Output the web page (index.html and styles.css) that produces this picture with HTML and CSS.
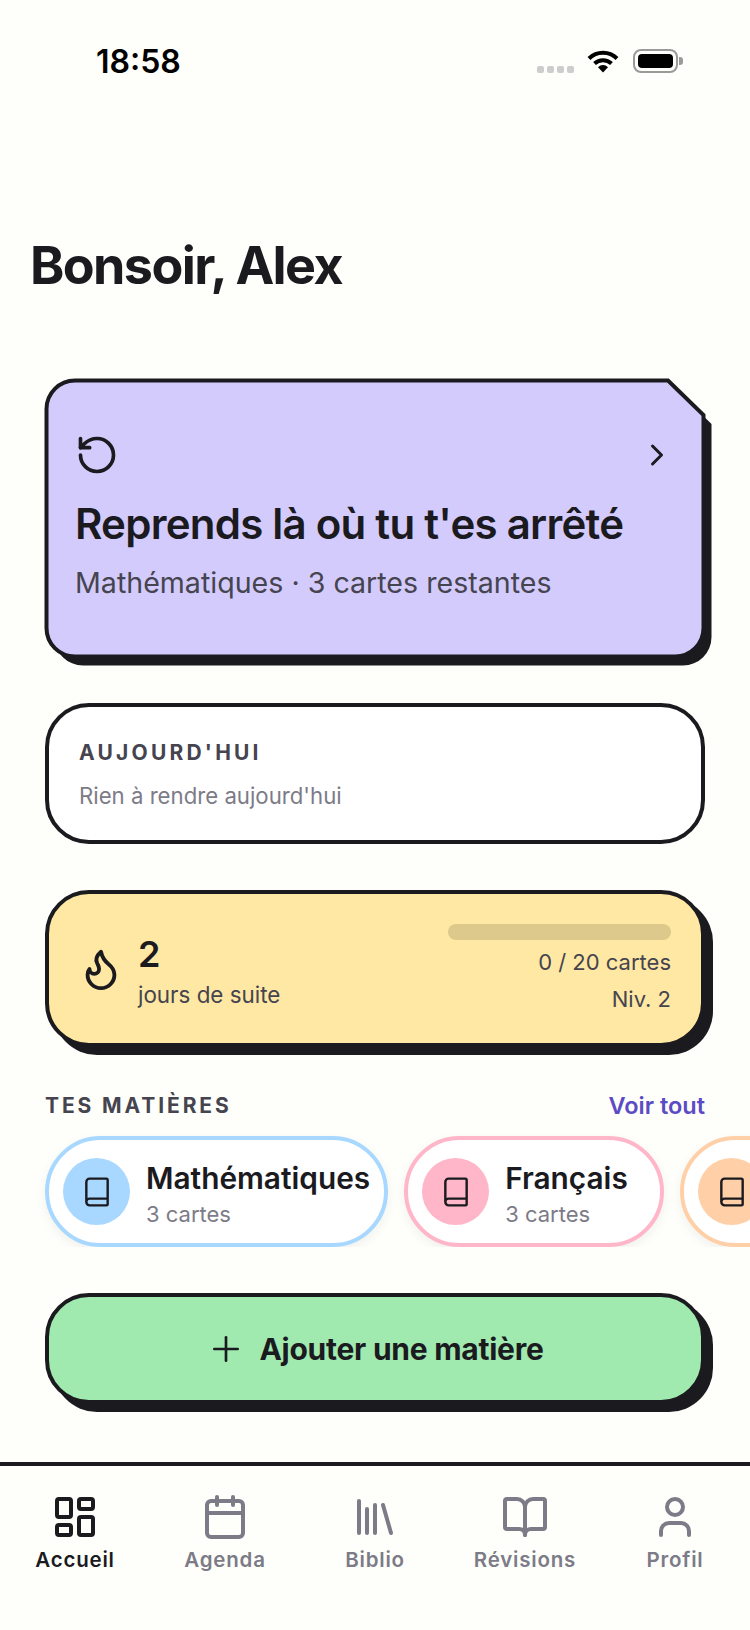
FILE: index.html
```html
<!DOCTYPE html>
<html lang="fr">
<head>
<meta charset="UTF-8">
<title>Accueil</title>
<link rel="stylesheet" href="styles.css">
</head>
<body>

<div class="status-bar">
	<span class="status-time">18:58</span>
	<div class="status-icons">
		<div class="signal-dots"><i></i><i></i><i></i><i></i></div>
		<svg class="wifi" width="32" height="24" viewBox="0 0 32 24">
			<path d="M2 9.5a20 20 0 0 1 28 0" fill="none" stroke="#000" stroke-width="4"/>
			<path d="M7.5 14.5a12.4 12.4 0 0 1 17 0" fill="none" stroke="#000" stroke-width="4"/>
			<path d="M11 18.2a7 7 0 0 1 10 0L16 23.5z" fill="#000"/>
		</svg>
		<div class="battery"><div class="battery-fill"></div></div>
		<div class="battery-nub"></div>
	</div>
</div>

<h1 class="greeting">Bonsoir, Alex</h1>

<div class="content">
	<!-- carte reprendre, coin coupe dessine en svg -->
	<div class="card-resume">
		<svg class="card-resume-bg" width="660" height="279" viewBox="0 0 660 279">
			<path transform="translate(8 9)" d="M30 1.5H623L658.5 36V249a28.5 28.5 0 0 1-28.5 28.5H30A28.5 28.5 0 0 1 1.5 249V30A28.5 28.5 0 0 1 30 1.5z" fill="#1a1a1f"/>
			<path d="M30 1.5H623L658.5 36V249a28.5 28.5 0 0 1-28.5 28.5H30A28.5 28.5 0 0 1 1.5 249V30A28.5 28.5 0 0 1 30 1.5z" fill="#d4cbfd" stroke="#1a1a1f" stroke-width="4"/>
		</svg>
		<div class="card-resume-top">
			<svg class="ico" width="44" height="44" viewBox="0 0 24 24"><path d="M3 12a9 9 0 1 0 9-9 9.75 9.75 0 0 0-6.74 2.74L3 8"/><path d="M3 3v5h5"/></svg>
			<svg class="ico" width="36" height="36" viewBox="0 0 24 24"><path d="m9 18 6-6-6-6"/></svg>
		</div>
		<div class="card-resume-title">Reprends là où tu t'es arrêté</div>
		<div class="card-resume-sub">Mathématiques · 3 cartes restantes</div>
	</div>

	<div class="card-today">
		<div class="label">AUJOURD'HUI</div>
		<div class="card-today-text">Rien à rendre aujourd'hui</div>
	</div>

	<div class="card-streak">
		<svg class="ico" width="46" height="46" viewBox="0 0 24 24"><path d="M8.5 14.5A2.5 2.5 0 0 0 11 12c0-1.38-.5-2-1-3-1.072-2.143-.224-4.054 2-6 .5 2.5 2 4.9 4 6.5 2 1.6 3 3.5 3 5.5a7 7 0 1 1-14 0c0-1.153.433-2.294 1-3a2.5 2.5 0 0 0 2.5 2.5z"/></svg>
		<div class="streak-left">
			<div class="streak-num">2</div>
			<div class="streak-text">jours de suite</div>
		</div>
		<div class="streak-right">
			<div class="progress"></div>
			<div class="streak-count">0 / 20 cartes</div>
			<div class="streak-level">Niv. 2</div>
		</div>
	</div>

	<div class="section-head">
		<span class="label">TES MATIÈRES</span>
		<span class="see-all">Voir tout</span>
	</div>
</div>

<div class="chips">
	<div class="chip chip-blue">
		<div class="chip-circle"><svg class="ico ico-thin" width="32" height="32" viewBox="0 0 24 24"><path d="M4 19.5v-15A2.5 2.5 0 0 1 6.5 2H19a1 1 0 0 1 1 1v18a1 1 0 0 1-1 1H6.5a1 1 0 0 1 0-5H20"/></svg></div>
		<div class="chip-body">
			<div class="chip-name">Mathématiques</div>
			<div class="chip-sub">3 cartes</div>
		</div>
	</div>
	<div class="chip chip-pink">
		<div class="chip-circle"><svg class="ico ico-thin" width="32" height="32" viewBox="0 0 24 24"><path d="M4 19.5v-15A2.5 2.5 0 0 1 6.5 2H19a1 1 0 0 1 1 1v18a1 1 0 0 1-1 1H6.5a1 1 0 0 1 0-5H20"/></svg></div>
		<div class="chip-body">
			<div class="chip-name">Français</div>
			<div class="chip-sub">3 cartes</div>
		</div>
	</div>
	<div class="chip chip-orange">
		<div class="chip-circle"><svg class="ico ico-thin" width="32" height="32" viewBox="0 0 24 24"><path d="M4 19.5v-15A2.5 2.5 0 0 1 6.5 2H19a1 1 0 0 1 1 1v18a1 1 0 0 1-1 1H6.5a1 1 0 0 1 0-5H20"/></svg></div>
	</div>
</div>

<div class="content">
	<div class="btn-add">
		<svg class="ico ico-plus" width="40" height="40" viewBox="0 0 24 24"><path d="M5 12h14"/><path d="M12 5v14"/></svg>
		<span>Ajouter une matière</span>
	</div>
</div>

<div class="tabbar">
	<div class="tab tab-active">
		<svg class="ico" width="48" height="48" viewBox="0 0 24 24"><rect x="3" y="3" width="7" height="9" rx="1"/><rect x="14" y="3" width="7" height="5" rx="1"/><rect x="14" y="12" width="7" height="9" rx="1"/><rect x="3" y="16" width="7" height="5" rx="1"/></svg>
		<span>Accueil</span>
	</div>
	<div class="tab">
		<svg class="ico" width="48" height="48" viewBox="0 0 24 24"><path d="M8 2v4"/><path d="M16 2v4"/><rect x="3" y="4" width="18" height="18" rx="2"/><path d="M3 10h18"/></svg>
		<span>Agenda</span>
	</div>
	<div class="tab">
		<svg class="ico" width="48" height="48" viewBox="0 0 24 24"><path d="m16 6 4 14"/><path d="M12 6v14"/><path d="M8 8v12"/><path d="M4 4v16"/></svg>
		<span>Biblio</span>
	</div>
	<div class="tab">
		<svg class="ico" width="48" height="48" viewBox="0 0 24 24"><path d="M12 7v14"/><path d="M3 18a1 1 0 0 1-1-1V4a1 1 0 0 1 1-1h5a4 4 0 0 1 4 4 4 4 0 0 1 4-4h5a1 1 0 0 1 1 1v13a1 1 0 0 1-1 1h-6a3 3 0 0 0-3 3 3 3 0 0 0-3-3z"/></svg>
		<span>Révisions</span>
	</div>
	<div class="tab">
		<svg class="ico" width="48" height="48" viewBox="0 0 24 24"><path d="M19 21v-2a4 4 0 0 0-4-4H9a4 4 0 0 0-4 4v2"/><circle cx="12" cy="7" r="4"/></svg>
		<span>Profil</span>
	</div>
</div>

</body>
</html>
```

FILE: styles.css
```css
/* base */
body {
	margin: 0;
	width: 750px;
	height: 1630px;
	overflow: hidden;
	background-color: #fefffa;
	color: #1a1a1f;
	font-family: "Inter", "Liberation Sans", sans-serif;
}

.ico {
	display: block;
	flex: none;
	fill: none;
	stroke: currentColor;
	stroke-width: 2;
	stroke-linecap: round;
	stroke-linejoin: round;
}

.label {
	font-size: 21px;
	font-weight: 700;
	letter-spacing: 3.2px;
	color: #45444f;
}

.content {
	padding: 0 45px;
}

/* status bar */
.status-bar {
	height: 122px;
	display: flex;
	justify-content: space-between;
	align-items: center;
	padding-left: 96px;
	padding-right: 67px;
	box-sizing: border-box;
}

.status-time {
	font-size: 32px;
	font-weight: 600;
	color: #000;
}

.status-icons {
	display: flex;
	align-items: center;
}

.signal-dots {
	display: flex;
	gap: 3px;
	margin-top: 17px;
	margin-right: 13px;
}

.signal-dots i {
	width: 7px;
	height: 7px;
	border-radius: 2px;
	background-color: #cdcdcd;
}

.wifi {
	margin-right: 14px;
}

.battery {
	width: 45px;
	height: 24px;
	padding: 3px;
	box-sizing: border-box;
	border: 2px solid #9a9a9a;
	border-radius: 8px;
}

.battery-fill {
	height: 100%;
	background-color: #000;
	border-radius: 4px;
}

.battery-nub {
	width: 4px;
	height: 8px;
	margin-left: 1px;
	background-color: #9a9a9a;
	border-radius: 0 3px 3px 0;
}

/* titre */
.greeting {
	margin: 114px 0 83px 30px;
	font-size: 52px;
	line-height: 60px;
	font-weight: 700;
	letter-spacing: -1.6px;
}

/* carte reprendre */
.card-resume {
	position: relative;
	height: 279px;
	padding: 54px 30px 0;
	box-sizing: border-box;
}

.card-resume-bg {
	position: absolute;
	top: 0;
	left: 0;
	overflow: visible;
}

.card-resume-top {
	position: relative;
	display: flex;
	justify-content: space-between;
	align-items: center;
}

.card-resume-title {
	position: relative;
	margin-top: 23px;
	font-size: 42px;
	line-height: 48px;
	font-weight: 600;
	letter-spacing: -0.75px;
}

.card-resume-sub {
	position: relative;
	margin-top: 17px;
	font-size: 28.6px;
	line-height: 36px;
	color: #45444f;
}

/* carte aujourd'hui */
.card-today {
	height: 141px;
	margin-top: 45px;
	padding: 33px 30px 0;
	box-sizing: border-box;
	background-color: #fff;
	border: 4px solid #1a1a1f;
	border-radius: 44px;
}

.card-today .label {
	line-height: 26px;
}

.card-today-text {
	margin-top: 16px;
	font-size: 22.2px;
	line-height: 28px;
	color: #7c7b87;
}

/* carte serie */
.card-streak {
	display: flex;
	align-items: center;
	height: 157px;
	margin-top: 46px;
	padding: 0 30px 0 29px;
	box-sizing: border-box;
	background-color: #ffe8a3;
	border: 4px solid #1a1a1f;
	border-radius: 44px;
	box-shadow: 8px 8px 0 #1a1a1f;
}

.streak-left {
	margin-left: 14px;
	padding-top: 4px;
}

.streak-num {
	font-size: 36px;
	line-height: 44px;
	font-weight: 600;
}

.streak-text {
	margin-top: 5px;
	font-size: 22.4px;
	line-height: 28px;
	color: #45444f;
}

.streak-right {
	margin-left: auto;
	width: 223px;
	text-align: right;
	font-size: 22px;
	line-height: 28px;
	color: #45444f;
}

.progress {
	height: 16px;
	margin-bottom: 8px;
	background-color: #dcc98b;
	border-radius: 8px;
}

.streak-level {
	margin-top: 9px;
}

/* matieres */
.section-head {
	display: flex;
	justify-content: space-between;
	align-items: center;
	margin-top: 46px;
	line-height: 26px;
}

.section-head .label {
	letter-spacing: 2.9px;
}

.see-all {
	font-size: 23.5px;
	font-weight: 600;
	color: #5b4bc4;
}

.chips {
	display: flex;
	gap: 16px;
	overflow: hidden;
	margin-top: 5px;
	padding: 12px 0 0 45px;
}

.chip {
	display: flex;
	align-items: center;
	flex: none;
	gap: 16px;
	min-width: 260px;
	height: 111px;
	padding: 0 14px;
	box-sizing: border-box;
	background-color: #fff;
	border: 4px solid;
	border-radius: 56px;
	box-shadow: 0 4px 12px rgba(0, 0, 0, 0.06);
}

.chip-circle {
	display: flex;
	justify-content: center;
	align-items: center;
	width: 67px;
	height: 67px;
	border-radius: 50%;
}

.chip-body {
	padding-top: 4px;
}

.ico-thin {
	stroke-width: 1.8;
}

.chip-blue {
	border-color: #a8d8ff;
}
.chip-blue .chip-circle {
	background-color: #a8d8ff;
}

.chip-pink {
	border-color: #ffb6c8;
}
.chip-pink .chip-circle {
	background-color: #ffb6c8;
}

.chip-orange {
	border-color: #ffd0a8;
}
.chip-orange .chip-circle {
	background-color: #ffd0a8;
}

.chip-name {
	font-size: 29.8px;
	line-height: 36px;
	font-weight: 600;
}

.chip-sub {
	margin-top: 4px;
	font-size: 22px;
	line-height: 28px;
	color: #7c7b87;
}

/* bouton ajouter */
.btn-add {
	display: flex;
	justify-content: center;
	align-items: center;
	gap: 13px;
	height: 111px;
	margin-top: 46px;
	box-sizing: border-box;
	background-color: #a0eab0;
	border: 4px solid #1a1a1f;
	border-radius: 44px;
	box-shadow: 8px 8px 0 #1a1a1f;
	font-size: 30px;
	font-weight: 700;
	letter-spacing: -0.25px;
}

.ico-plus {
	stroke-width: 1.6;
}

/* barre du bas */
.tabbar {
	display: flex;
	margin-top: 58px;
	padding-top: 27px;
	border-top: 4px solid #1a1a1f;
}

.tab {
	flex: 1;
	display: flex;
	flex-direction: column;
	align-items: center;
	font-size: 20.5px;
	line-height: 24px;
	font-weight: 600;
	letter-spacing: 0.8px;
	color: #7c7b87;
}

.tab span {
	margin-top: 7px;
}

.tab-active {
	color: #1a1a1f;
}
```
